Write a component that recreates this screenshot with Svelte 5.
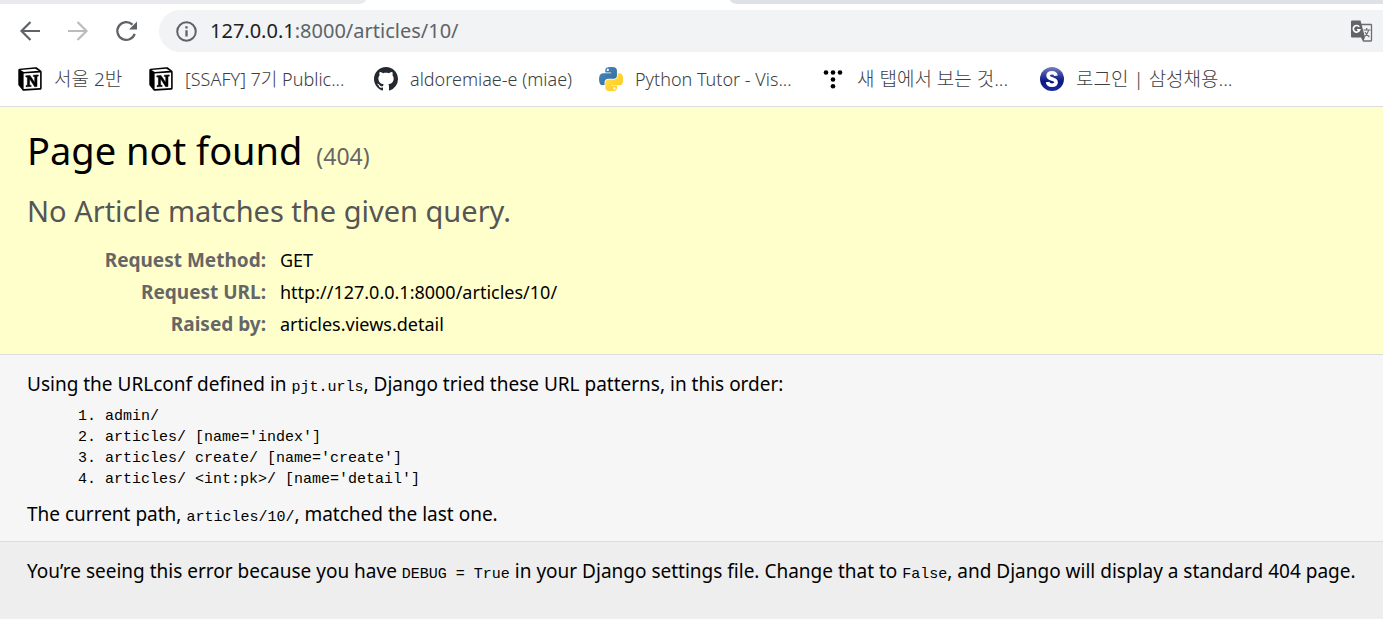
<script>
  const details = [
    ['Request Method:', 'GET'],
    ['Request URL:', 'http://127.0.0.1:8000/articles/10/'],
    ['Raised by:', 'articles.views.detail'],
  ];
  const patterns = [
    ['admin/'],
    ['articles/', "[name='index']"],
    ['articles/', 'create/', "[name='create']"],
    ['articles/', '<int:pk>/', "[name='detail']"],
  ];
  const bookmarks = [
    { icon: 'notion', label: '서울 2반', lang: 'ko' },
    { icon: 'notion', label: '[SSAFY] 7기 Public...', lang: 'en' },
    { icon: 'github', label: 'aldoremiae-e (miae)', lang: 'en' },
    { icon: 'python', label: 'Python Tutor - Vis...', lang: 'en' },
    { icon: 'tistory', label: '새 탭에서 보는 것...', lang: 'ko' },
    { icon: 'samsung', label: '로그인 | 삼성채용...', lang: 'ko' },
  ];
  let address = $state('127.0.0.1:8000/articles/10/');
  const slash = $derived(address.indexOf(':') < 0 ? address.length : address.indexOf(':'));
</script>

{#snippet favicon(name)}
  {#if name === 'notion'}
    <svg class="favicon" viewBox="0 0 24 24" aria-hidden="true">
      <path d="M1.500 1.700 17 .3c1.200-.1 1.700 0 2.300.5l3.600 2.600c.6.500.8.800.8 1.500v16c0 1.100-.6 1.700-1.700 1.800L6.200 23.700c-.9.1-1.400-.1-1.900-.8L.9 18.700c-.5-.7-.6-1-.6-1.800V3.300c0-.8.400-1.500 1.200-1.600Z" fill="#000" />
      <path d="M2.500 2.900 17.200 1.700l3.700 2-15.100 1.200Z" fill="#fff" />
      <path d="M5.600 6.500 22.100 5.400v15.700L5.600 22.100Z" fill="#fff" />
      <path d="M7.800 8.700 12 8.400l4.700 7.200V9.700l-1.400-.3V8.200l5-.3v1.200l-1.300.4v10l-2.300.2-5.100-7.900v6.300l1.600.3v1.100l-5.200.3v-1.200l1.400-.4V10.200l-1.600-.2Z" fill="#000" stroke="#000" stroke-width=".5" />
    </svg>
  {:else if name === 'github'}
    <svg class="favicon" viewBox="0 0 16 16" aria-hidden="true">
      <path fill="#24292f" d="M8 0C3.580 0 0 3.580 0 8c0 3.540 2.290 6.530 5.470 7.590.4.070.55-.17.55-.38 0-.19-.01-.82-.01-1.490-2.010.37-2.530-.49-2.690-.94-.09-.23-.48-.94-.82-1.130-.28-.15-.68-.52-.01-.53.63-.01 1.080.58 1.230.82.72 1.210 1.870.87 2.330.66.070-.52.28-.87.51-1.070-1.780-.2-3.640-.89-3.640-3.950 0-.87.31-1.590.82-2.150-.08-.2-.36-1.020.08-2.120 0 0 .67-.21 2.200.82.64-.18 1.320-.27 2-.27s1.360.09 2 .27c1.530-1.040 2.200-.82 2.200-.82.44 1.100.16 1.920.08 2.120.51.56.82 1.270.82 2.150 0 3.070-1.870 3.750-3.650 3.950.29.25.54.73.54 1.480 0 1.070-.01 1.930-.01 2.200 0 .21.15.46.55.38A8.010 8.010 0 0 0 16 8c0-4.420-3.580-8-8-8Z" />
    </svg>
  {:else if name === 'python'}
    <svg class="favicon" viewBox="0 0 110 110" aria-hidden="true">
      <defs>
        <linearGradient id="py-blue" x1="0" y1="0" x2="1" y2="1"><stop offset="0" stop-color="#4b8bbe" /><stop offset="1" stop-color="#306998" /></linearGradient>
        <linearGradient id="py-gold" x1="0" y1="0" x2="1" y2="1"><stop offset="0" stop-color="#ffe052" /><stop offset="1" stop-color="#ffc916" /></linearGradient>
      </defs>
      <path fill="url(#py-blue)" d="M54.900 0C50.300 0 46 .4 42.100 1.100 30.800 3.100 28.700 7.300 28.700 15v10.200h26.800v3.400H18.700c-7.800 0-14.600 4.700-16.700 13.600-2.500 10.200-2.600 16.600 0 27.200 1.900 7.900 6.400 13.600 14.200 13.600h9.200V70.800c0-8.800 7.600-16.600 16.700-16.600h26.700c7.400 0 13.400-6.100 13.400-13.600V15c0-7.300-6.100-12.700-13.400-13.900C64.200.3 59.500 0 54.900 0ZM40.400 8.200c2.800 0 5 2.300 5 5.100s-2.200 5.100-5 5.100-5-2.300-5-5.100 2.200-5.100 5-5.100Z" />
      <path fill="url(#py-gold)" d="M85.600 28.700v11.900c0 9.200-7.800 17-16.700 17H42.100c-7.300 0-13.400 6.200-13.400 13.600v25.500c0 7.200 6.300 11.500 13.400 13.600 8.500 2.500 16.600 2.900 26.800 0 6.700-2 13.400-5.900 13.400-13.600V86.500H55.500v-3.400h40.200c7.800 0 10.700-5.400 13.400-13.600 2.800-8.400 2.700-16.500 0-27.200-1.900-7.700-5.600-13.600-13.400-13.600ZM70.600 93.300c2.800 0 5 2.300 5 5.100s-2.200 5.100-5 5.100-5-2.300-5-5.100 2.200-5.100 5-5.100Z" />
    </svg>
  {:else if name === 'tistory'}
    <svg class="favicon" viewBox="0 0 24 24" aria-hidden="true">
      <g fill="#000"><circle cx="5" cy="5.500" r="2.300" /><circle cx="12" cy="5.500" r="2.300" /><circle cx="19" cy="5.500" r="2.300" /><circle cx="12" cy="12.500" r="2.300" /><circle cx="12" cy="19.300" r="2.300" /></g>
    </svg>
  {:else}
    <svg class="favicon" viewBox="0 0 24 24" aria-hidden="true">
      <defs><linearGradient id="ss" x1="0" y1="0" x2="0" y2="1"><stop offset="0" stop-color="#7480bd" /><stop offset=".4" stop-color="#2a3798" /><stop offset=".6" stop-color="#0c1682" /><stop offset="1" stop-color="#1a2a9c" /></linearGradient></defs>
      <circle cx="12" cy="12" r="12" fill="url(#ss)" />
      <path d="M16 8.800c-.3-2-1.900-3-4-3-2.300 0-3.900 1.100-3.900 2.900 0 4.200 8 2.500 8 6.600 0 1.900-1.700 2.900-4.100 2.900-2.500 0-4.200-1.100-4.400-3.200" fill="none" stroke="#fff" stroke-width="3.600" />
    </svg>
  {/if}
{/snippet}

<div class="window">
  <header>
    <div class="tabs"><span class="tab before"></span><span class="tab active"></span><span class="tab after"></span></div>
    <div class="toolbar">
      <nav class="controls" aria-label="Navigation">
        <button aria-label="Back"><svg viewBox="0 0 24 24" fill="none" stroke="#5f6368" stroke-width="2.200"><path d="M22 12H3.500M12.500 3l-9 9 9 9" /></svg></button>
        <button aria-label="Forward" disabled><svg viewBox="0 0 24 24" fill="none" stroke="#babcbe" stroke-width="2.200"><path d="M2 12h18.500M11.500 3l9 9-9 9" /></svg></button>
        <button aria-label="Reload"><svg viewBox="0 0 24 24" fill="none" stroke="#5f6368" stroke-width="2.300"><path d="M20.700 14.800A8.900 8.900 0 1 1 18.500 5.600" /><path d="M23 2.500v8h-8Z" fill="#5f6368" stroke="none" /></svg></button>
      </nav>
      <div class="omnibox">
        <button aria-label="Site information"><svg viewBox="0 0 24 24" fill="none" stroke="#5f6368" stroke-width="2"><circle cx="12.500" cy="12.500" r="9.300" /><path d="M12.500 11.200V17.500M12.500 7.300v2.300" stroke-width="2.300" /></svg></button>
        <div class="address">
          <div class="shown" aria-hidden="true"><span>{address.slice(0, slash)}</span>{address.slice(slash)}</div>
          <input aria-label="Address" bind:value={address} spellcheck="false" />
        </div>
        <button aria-label="Translate this page">
          <svg viewBox="0 0 24 24">
            <path d="M11 5.500h11q.5 0 .5.500V21.500q0 .5-.5.500H14" fill="#f1f3f4" stroke="#6b6e72" stroke-width="1.300" />
            <path d="M3 1.500h8.500L16 18.500H3q-1 0-1-1V2.500q0-1 1-1ZM12 18.500H16l-2 4Z" fill="#616569" />
            <path d="M10.300 7.900A3.300 3.300 0 1 0 10.800 10.700H8" fill="none" stroke="#fff" stroke-width="1.600" />
            <path d="M14.500 11H21.500M17.700 9v2M19.700 11q-.8 4-4.200 6.500M16 13q1.500 3 4.500 5" fill="none" stroke="#6b6e72" stroke-width="1.200" />
          </svg>
        </button>
      </div>
    </div>
    <nav class="bookmarks" aria-label="Bookmarks">
      {#each bookmarks as b}
        <a href="#{b.icon}" lang={b.lang}>{@render favicon(b.icon)}<span>{b.label}</span></a>
      {/each}
    </nav>
  </header>

  <main>
    <section class="summary">
      <h1>Page not found <span>(404)</span></h1>
      <p class="reason">No Article matches the given query.</p>
      <table>
        <tbody>
          {#each details as [name, value]}
            <tr><th scope="row">{name}</th><td>{value}</td></tr>
          {/each}
        </tbody>
      </table>
    </section>
    <section class="info">
      <p>Using the URLconf defined in <code>pjt.urls</code>, Django tried these URL patterns, in this order:</p>
      <ol>
        {#each patterns as parts}
          <li>{parts.join(' ')}</li>
        {/each}
      </ol>
      <p>The current path, <code>articles/10/</code>, matched the last one.</p>
    </section>
  </main>
  <footer>
    <p>You’re seeing this error because you have <code>DEBUG = True</code> in your Django settings file. Change that to <code>False</code>, and Django will display a standard 404 page.</p>
  </footer>
</div>

<style>
  :global(body) { margin: 0; background: #eee; }
  .window { font-family: 'Noto Sans', 'Noto Sans CJK KR', sans-serif; font-size: 19px; line-height: 24px; color: #000; }
  .window * { box-sizing: border-box; }
  header { background: #fff; border-bottom: 1px solid #dadce0; }
  button { display: flex; flex: none; padding: 0; border: 0; background: none; width: 24px; height: 24px; }
  button svg { width: 24px; height: 24px; }
  .tabs { display: grid; grid-template-columns: 366fr 364fr 653fr; height: 4px; background: #fff; }
  .before { background: #e8eaed; border-bottom-right-radius: 8px 4px; }
  .after { background: #dee1e6; border-bottom-left-radius: 8px 4px; }
  .toolbar { display: flex; padding: 6px 0 0 18px; }
  .controls { display: flex; align-items: center; gap: 24px; padding-right: 21px; }
  .omnibox { display: flex; flex: 1; align-items: center; gap: 12px; height: 42px; padding: 0 10px 0 15px; background: #f1f3f4; border-radius: 21px 0 0 21px; }
  .address { display: grid; flex: 1; font-size: 20px; line-height: 28px; }
  .shown, .address input { grid-area: 1 / 1; font: inherit; color: #5f6368; }
  .shown span { color: #202124; }
  .address input { width: 100%; padding: 0; border: 0; outline: 0; background: none; color: transparent; caret-color: #202124; }
  .bookmarks { display: grid; grid-template-columns: 131px 225px 225px 222px 219px 1fr; align-items: center; height: 54px; padding-left: 18px; }
  .bookmarks a { display: flex; align-items: center; gap: 12px; color: #3c4043; text-decoration: none; white-space: nowrap; font-size: 18px; font-weight: 300; }
  .bookmarks a:lang(ko) { font-size: 19px; }
  .favicon { flex: none; width: 24px; height: 24px; }
  .summary { padding: 19px 27px 14px; background: #ffc; border-bottom: 1px solid #ddd; }
  h1, p { margin: 0; }
  h1 { font-size: 38px; line-height: 48px; font-weight: 400; }
  h1 span { margin-left: 4px; font-size: 23px; color: #666; }
  .reason { margin: 11px 0 13px; font-size: 29px; line-height: 40px; color: #555; }
  table { border-collapse: collapse; }
  th, td { padding: 4px 0; line-height: 24px; text-align: left; }
  th { width: 253px; padding-right: 14px; text-align: right; color: #666; }
  td { font-size: 18px; }
  .info { padding: 17px 27px 13px; background: #f6f6f6; border-bottom: 1px solid #ddd; }
  code, ol { font-family: 'Liberation Mono', monospace; font-size: 15px; }
  code { line-height: 20px; }
  ol { margin: 8px 0 12px; padding-left: 78px; line-height: 21px; }
  footer { padding: 17px 0 36px 27px; background: #eee; }
</style>
